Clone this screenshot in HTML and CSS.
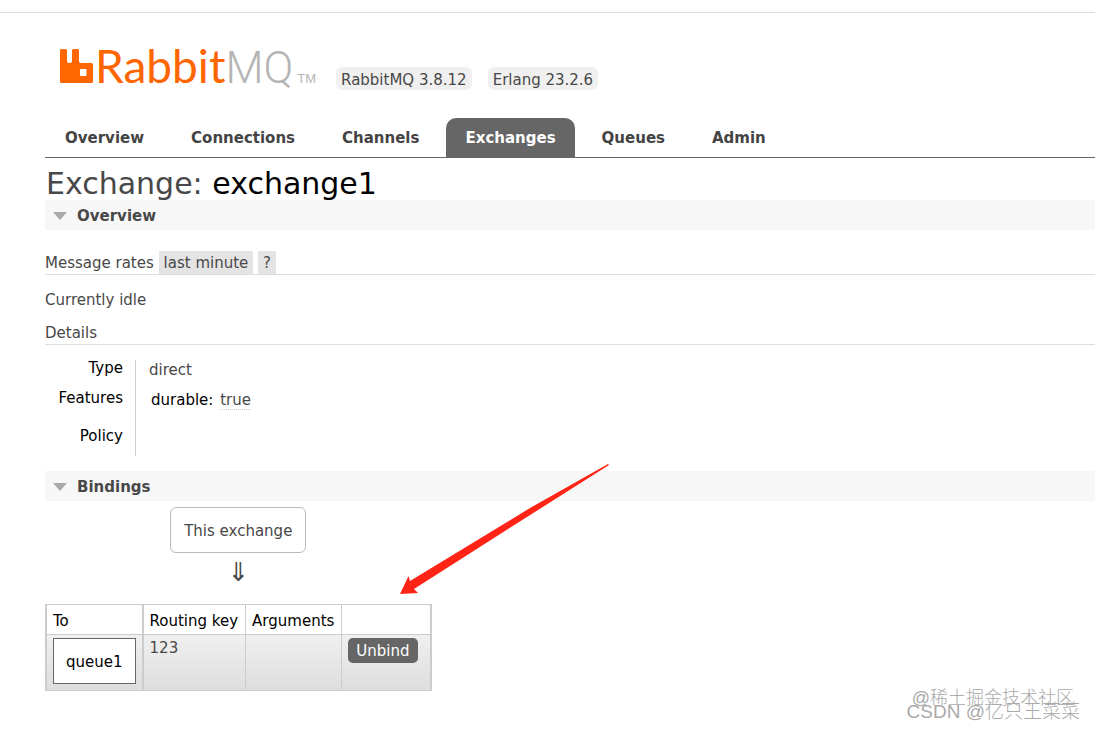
FILE: index.html
```html
<!DOCTYPE html>
<html lang="en">
<head>
  <title>RabbitMQ Management</title>
  <meta charset="UTF-8" />
  <link rel="stylesheet" href="styles.css">
</head>
<body>
  <header>
    <div class="logo">
      <svg class="mark" width="33" height="34" viewBox="0 0 33 34" aria-hidden="true">
        <path fill="#ff6600" fill-rule="evenodd" d="M1.500 0H5.500Q7 0 7 1.500V12Q7 14 8.500 14H10.500Q12 14 12 12V1.500Q12 0 13.500 0H17.500Q19 0 19 1.500V12Q19 14 21 14H31.500Q33 14 33 15.500V32.500Q33 34 31.500 34H1.500Q0 34 0 32.500V1.500Q0 0 1.500 0ZM21 20Q20 20 20 21V26Q20 27 21 27H25.500Q26.500 27 26.500 26V21Q26.500 20 25.500 20Z"/>
      </svg>
      <span class="rabbit">Rabbit</span><span class="mq">MQ</span><span class="tm">TM</span>
    </div>
    <ul class="versions">
      <li>RabbitMQ 3.8.12</li>
      <li>Erlang 23.2.6</li>
    </ul>
  </header>

  <nav>
    <a href="#/">Overview</a>
    <a href="#/connections">Connections</a>
    <a href="#/channels">Channels</a>
    <a href="#/exchanges" class="selected">Exchanges</a>
    <a href="#/queues">Queues</a>
    <a href="#/users">Admin</a>
  </nav>

  <main>
    <h1>Exchange: <b>exchange1</b></h1>

    <section class="overview">
      <h2>Overview</h2>
      <h3>Message rates <button class="option">last minute</button> <button class="option help">?</button></h3>
      <p>Currently idle</p>
      <h3 class="details">Details</h3>
      <table class="facts">
        <tr><th scope="row">Type</th><td>direct</td></tr>
        <tr class="features"><th scope="row">Features</th><td><span class="param">durable:</span> <abbr>true</abbr></td></tr>
        <tr class="policy"><th scope="row">Policy</th><td></td></tr>
      </table>
    </section>

    <section class="bindings">
      <h2>Bindings</h2>
      <div class="diagram">
        <div class="this-exchange">This exchange</div>
        <div class="down">&#8659;</div>
        <table class="list">
          <thead>
            <tr>
              <th class="to">To</th>
              <th>Routing key</th>
              <th>Arguments</th>
              <th></th>
            </tr>
          </thead>
          <tbody>
            <tr>
              <td class="to"><a class="queue" href="#/queues/queue1">queue1</a></td>
              <td>123</td>
              <td></td>
              <td class="actions"><button class="unbind">Unbind</button></td>
            </tr>
          </tbody>
        </table>
      </div>
      <svg class="pointer" width="210" height="132" viewBox="0 0 210 132" aria-hidden="true">
        <path fill="#ff2416" d="M208 0L130 44L10 117L8.500 112L0 130L18 129L14 125L138 46L209 1Z"/>
      </svg>
    </section>
  </main>

  <div class="watermark" lang="zh">
    <span class="juejin">@稀土掘金技术社区</span>
    <span class="csdn">CSDN @亿只王菜菜</span>
  </div>
</body>
</html>
```

FILE: styles.css
```css
html {
  background: #fff;
}
body {
  box-sizing: border-box;
  min-height: calc(100vh - 12px);
  margin: 12px 0 0;
  border-top: 1px solid #ddd;
  font: 15px/20px Verdana, "DejaVu Sans", sans-serif;
  color: #484848;
  position: relative;
}
header {
  display: flex;
  align-items: flex-end;
  gap: 20px;
  height: 77px;
  padding-left: 60px;
}
.logo {
  display: flex;
  align-items: baseline;
  height: 51px;
  line-height: 54px;
  font-family: Lato, sans-serif;
  font-size: 46px;
}
.mark {
  margin-right: 2px;
}
.rabbit {
  color: #f60;
}
.mq {
  color: #b4b4b4;
  font-family: Roboto, sans-serif;
  font-size: 44px;
  font-weight: 300;
}
.tm {
  color: #b4b4b4;
  font: 13px/13px "Liberation Sans", sans-serif;
  margin-left: 4px;
}
.versions {
  display: flex;
  gap: 16px;
  list-style: none;
  margin: 0;
  padding: 0;
}
.versions li {
  padding: 4px 5px 0;
  line-height: 19px;
  background: #f0f0f0;
  border-radius: 6px;
}
nav {
  display: flex;
  gap: 7px;
  margin: 28px 0 0 45px;
  border-bottom: 1px solid #666;
}
nav a {
  padding: 10px 20px 9px;
  border-radius: 10px 10px 0 0;
  color: #444;
  font-weight: bold;
  text-decoration: none;
}
nav a.selected {
  padding: 10px 19px 9px;
  background: #666;
  color: #fff;
}
main {
  padding-left: 45px;
}
h1 {
  margin: 0;
  padding: 9px 0 0 1px;
  font-size: 30px;
  line-height: 33px;
  font-weight: normal;
}
h1 b {
  color: #000;
  font-weight: normal;
}
h2 {
  display: flex;
  align-items: center;
  gap: 10px;
  margin: 0;
  padding: 6px 8px 4px;
  font-size: 15px;
  background: #f7f7f7;
}
h2::before {
  content: "";
  border: 7px solid transparent;
  border-top: 8px solid #aaa;
  border-bottom: 0;
}
h3 {
  margin: 21px 0 15px;
  font-size: 15px;
  line-height: 22px;
  font-weight: normal;
  border-bottom: 1px solid #ddd;
}
h3.details {
  margin: 12px 0 15px;
}
p {
  margin: 0;
}
.option {
  border: 0;
  padding: 1px 5px 0;
  font: inherit;
  line-height: 22px;
  color: #484848;
  background: #e4e4e4;
}
.facts {
  border-collapse: collapse;
}
.facts th {
  width: 78px;
  padding: 0 12px 4px 0;
  line-height: 16px;
  font-weight: normal;
  text-align: right;
  color: #000;
  border-right: 1px solid #ccc;
}
.facts td {
  padding: 0 0 0 13px;
}
.features {
  height: 40px;
}
.policy {
  height: 36px;
}
.param {
  padding: 0 2px;
  color: #000;
}
abbr {
  border-bottom: 1px dotted #ccc;
}
.bindings {
  position: relative;
  margin-top: 15px;
}
.diagram {
  display: flex;
  flex-direction: column;
  align-items: center;
  width: fit-content;
}
.this-exchange {
  margin-top: 6px;
  padding: 13px 13px 11px;
  border: 1px solid #bbb;
  border-radius: 6px;
}
.down {
  margin: 4px 0 17px;
  font-size: 26px;
  line-height: 30px;
}
.list {
  border-collapse: collapse;
  border: 2px solid #ccc;
  border-width: 1px 2px;
}
.list th, .list td {
  padding: 3px 7px 3px 6px;
  text-align: left;
  vertical-align: top;
  border: 1px solid #ccc;
}
.list th {
  padding-top: 6px;
  padding-bottom: 3px;
  font-weight: normal;
  color: #000;
  line-height: 20px;
}
.list .to {
  padding-right: 6px;
  border-right-width: 2px;
}
.list .actions {
  padding-right: 12px;
}
.list tbody tr {
  background: linear-gradient(#f0f0f0, #ddd);
}
.queue {
  display: block;
  margin-bottom: 3px;
  padding: 13px 12px 11px;
  border: 1px solid #666;
  color: #000;
  background: #fff;
  text-decoration: none;
}
.unbind {
  border: 0;
  border-radius: 5px;
  padding: 2px 8px 0;
  font: inherit;
  line-height: 23px;
  color: #fff;
  background: #666;
}
.pointer {
  position: absolute;
  left: 355px;
  top: -7px;
}
.watermark {
  position: absolute;
  right: 15px;
  bottom: 11px;
  display: flex;
  flex-direction: column;
  align-items: flex-end;
  font: 18px/13px "Liberation Sans", "Noto Sans CJK SC", sans-serif;
  font-weight: 300;
  color: #aaa;
}
.juejin {
  padding-right: 6px;
}
.csdn {
  font-size: 19px;
}
```
